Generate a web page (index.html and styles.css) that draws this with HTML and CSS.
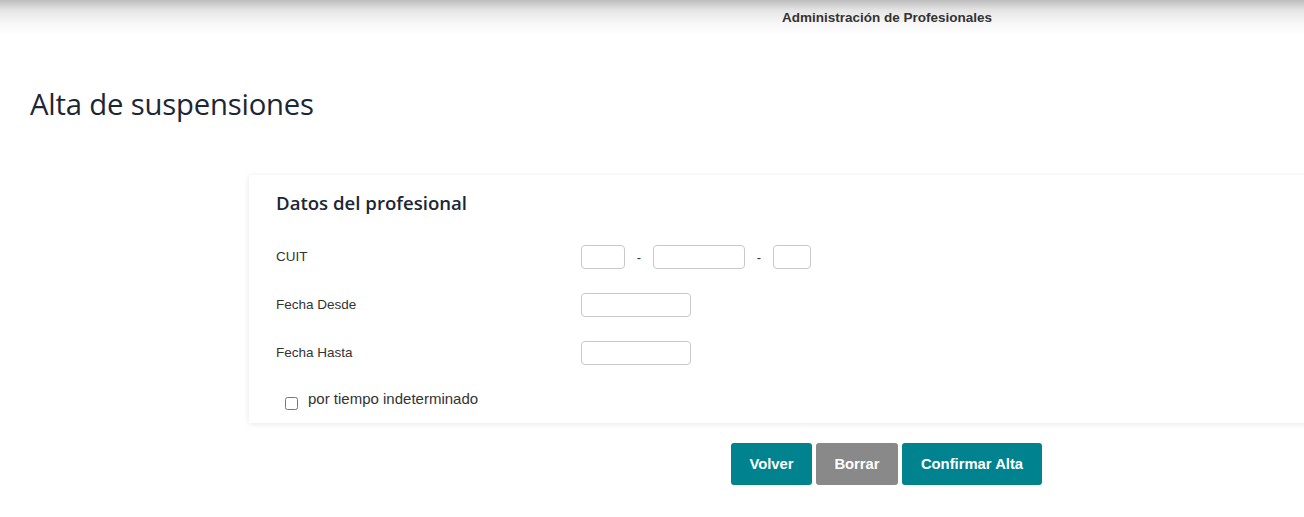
FILE: index.html
```html
<!DOCTYPE html>
<html lang="es">
<head>
<meta charset="utf-8">
<title>Alta de suspensiones</title>
<link rel="stylesheet" href="styles.css">
</head>
<body>
<header class="topbar">
  <span class="topbar-title">Administración de Profesionales</span>
</header>
<main class="page">
  <h1 class="page-title">Alta de suspensiones</h1>
  <section class="card">
    <h2 class="card-title">Datos del profesional</h2>
    <div class="form-grid">
      <label class="field-label">CUIT</label>
      <div class="field cuit">
        <input class="input w44" type="text">
        <span class="dash">-</span>
        <input class="input w92" type="text">
        <span class="dash">-</span>
        <input class="input w38" type="text">
      </div>
      <label class="field-label">Fecha Desde</label>
      <div class="field"><input class="input w110" type="text"></div>
      <label class="field-label">Fecha Hasta</label>
      <div class="field"><input class="input w110" type="text"></div>
    </div>
    <label class="check-row">
      <input class="check" type="checkbox">
      <span class="check-text">por tiempo indeterminado</span>
    </label>
  </section>
  <div class="actions">
    <button class="btn btn-teal btn-volver">Volver</button>
    <button class="btn btn-gray btn-borrar">Borrar</button>
    <button class="btn btn-teal btn-confirm">Confirmar Alta</button>
  </div>
</main>
</body>
</html>
```
FILE: styles.css
```css
html, body {
  margin: 0;
  padding: 0;
  background: #fff;
  overflow: hidden;
}
body {
  font-family: "Liberation Sans", Arial, sans-serif;
  color: #333;
  width: 1304px;
  height: 517px;
}
.topbar {
  height: 36px;
  background: linear-gradient(to bottom, #bdbdbd 0px, #e4e4e4 10px, #f6f6f6 22px, #ffffff 36px);
  box-sizing: border-box;
  padding-left: 782px;
  padding-top: 8px;
}
.topbar-title {
  font-size: 13.5px;
  font-weight: bold;
  color: #333;
}
.page {
  display: flex;
  flex-direction: column;
}
.page-title {
  margin: 50px 0 0 30px;
  font-family: "Open Sans", "Noto Sans", sans-serif;
  font-weight: 400;
  font-size: 29.3px;
  line-height: 36px;
  color: #1d2633;
  letter-spacing: -0.2px;
}
.card {
  margin: 53px 0 0 249px;
  width: 1080px;
  box-sizing: border-box;
  padding: 14px 0 14px 27px;
  background: #fff;
  box-shadow: 0 1px 6px rgba(0,0,0,0.1);
  height: 248px;
}
.card-title {
  margin: 0;
  font-family: "Open Sans", "Noto Sans", sans-serif;
  font-weight: 600;
  font-size: 18.6px;
  line-height: 28px;
  color: #1d2633;
}
.form-grid {
  display: grid;
  grid-template-columns: 305px auto;
  grid-auto-rows: 24px;
  row-gap: 24px;
  margin-top: 28px;
  align-items: center;
}
.field-label {
  font-size: 13.5px;
  color: #333;
  margin-top: -2px;
}
.field {
  display: flex;
  align-items: center;
}
.input {
  box-sizing: border-box;
  height: 24px;
  border: 1px solid #c8c8c8;
  border-radius: 4px;
  padding: 0;
  margin: 0;
  background: #fff;
}
.w44 { width: 44px; }
.w92 { width: 92px; }
.w38 { width: 38px; }
.w110 { width: 110px; }
.dash {
  font-size: 13px;
  color: #333;
  width: 28px;
  text-align: center;
}
.check-row {
  display: flex;
  align-items: flex-start;
  margin: 26px 0 0 9px;
}
.check {
  margin: 6px 10px 0 0;
  width: 13px;
  height: 13px;
}
.check-text {
  font-size: 15px;
  color: #333;
  line-height: 18px;
  margin-top: -1px;
}
.actions {
  display: flex;
  gap: 4px;
  margin: 20px 0 0 731px;
}
.btn {
  height: 42px;
  border: none;
  border-radius: 3px;
  color: #fff;
  font-family: "Liberation Sans", Arial, sans-serif;
  font-weight: bold;
  font-size: 14.8px;
  padding: 0;
  cursor: pointer;
}
.btn-teal { background: #00838f; }
.btn-gray { background: #898989; }
.btn-volver { width: 81px; }
.btn-borrar { width: 82px; }
.btn-confirm { width: 140px; }
```
